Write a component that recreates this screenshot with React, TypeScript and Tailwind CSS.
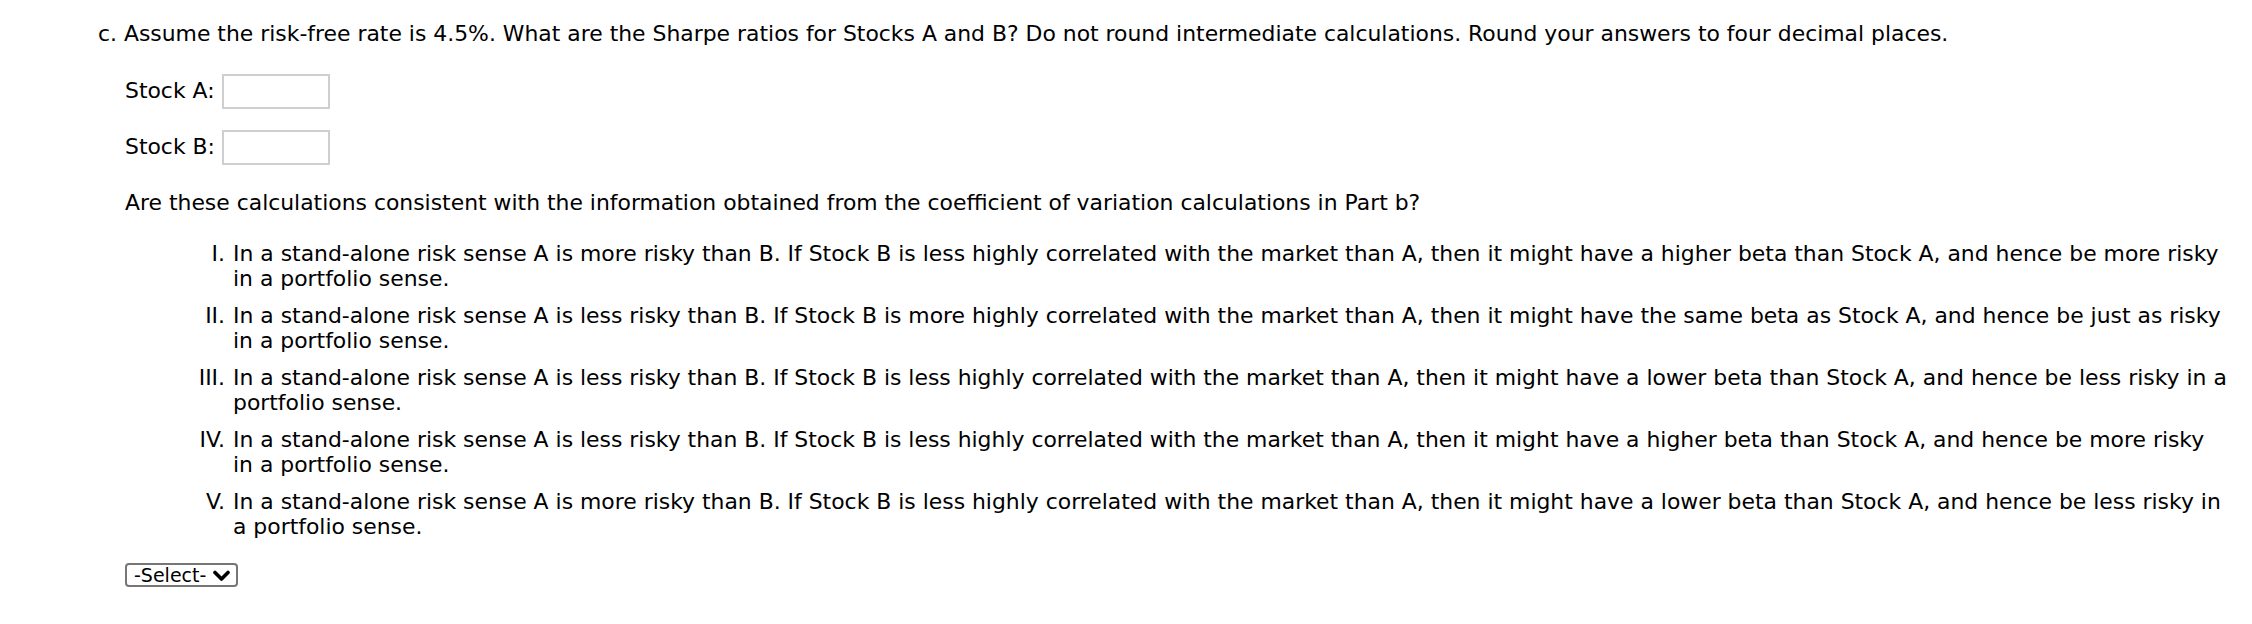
const options = [
  {
    num: "I.",
    text: "In a stand-alone risk sense A is more risky than B. If Stock B is less highly correlated with the market than A, then it might have a higher beta than Stock A, and hence be more risky in a portfolio sense.",
  },
  {
    num: "II.",
    text: "In a stand-alone risk sense A is less risky than B. If Stock B is more highly correlated with the market than A, then it might have the same beta as Stock A, and hence be just as risky in a portfolio sense.",
  },
  {
    num: "III.",
    text: "In a stand-alone risk sense A is less risky than B. If Stock B is less highly correlated with the market than A, then it might have a lower beta than Stock A, and hence be less risky in a portfolio sense.",
  },
  {
    num: "IV.",
    text: "In a stand-alone risk sense A is less risky than B. If Stock B is less highly correlated with the market than A, then it might have a higher beta than Stock A, and hence be more risky in\u00a0a portfolio sense.",
  },
  {
    num: "V.",
    text: "In a stand-alone risk sense A is more risky than B. If Stock B is less highly correlated with the market than A, then it might have a lower beta than Stock A, and hence be less risky in a portfolio sense.",
  },
];

function AnswerRow({ label }: { label: string }) {
  return (
    <div className="flex items-center gap-[7px] h-[35px]">
      <span>{label}</span>
      <input
        type="text"
        className="w-[108px] h-[35px] border-2 border-[#cfcfcf] bg-white outline-none"
      />
    </div>
  );
}

export default function App() {
  return (
    <div
      className="min-h-screen bg-white text-black text-[21.9px] leading-[24.5px] pt-[22px] pl-[98px] pr-[20px]"
      style={{ fontFamily: '"DejaVu Sans", Verdana, sans-serif' }}
    >
      <p>
        c. Assume the risk-free rate is 4.5%. What are the Sharpe ratios for Stocks A and B? Do not round
        intermediate calculations. Round your answers to four decimal places.
      </p>

      <div className="pl-[27px]">
        {/* Sharpe ratio inputs */}
        <div className="mt-[27px] flex flex-col gap-[21px]">
          <AnswerRow label="Stock A:" />
          <AnswerRow label="Stock B:" />
        </div>

        <p className="mt-[26px]">
          Are these calculations consistent with the information obtained from the coefficient of variation
          calculations in Part b?
        </p>

        <ol className="mt-[27px] flex flex-col gap-[13px]">
          {options.map((o) => (
            <li key={o.num} className="flex">
              <span className="w-[108px] shrink-0 text-right pr-[8px]">{o.num}</span>
              <span className="flex-1">{o.text}</span>
            </li>
          ))}
        </ol>

        {/* dropdown */}
        <div className="mt-[24px] inline-flex items-center gap-[7px] h-[24px] pl-[7px] pr-[6px] border-2 border-[#767676] rounded-[4px] text-[19px] leading-none">
          <span>-Select-</span>
          <svg width="17" height="12" viewBox="0 0 17 12" className="mt-[1px]">
            <polyline points="2,2.5 8.5,9 15,2.5" fill="none" stroke="black" strokeWidth="3.6" strokeLinecap="round" strokeLinejoin="round" />
          </svg>
        </div>
      </div>
    </div>
  );
}
